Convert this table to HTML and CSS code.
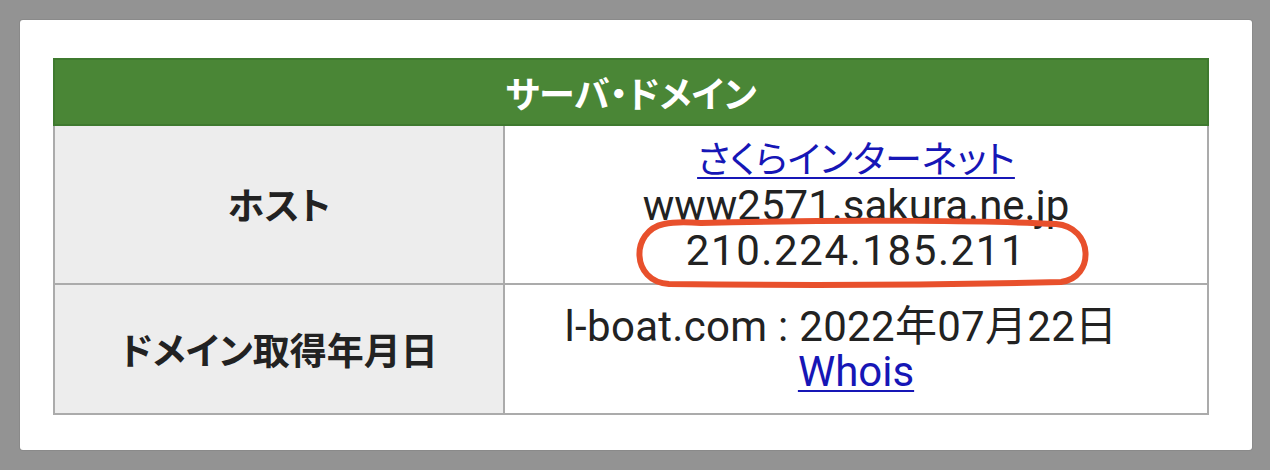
FILE: index.html
```html
<!DOCTYPE html>
<html lang="ja">
<head>
<meta charset="utf-8">
<link rel="stylesheet" href="styles.css">
</head>
<body>
<div class="panel">
  <table class="info">
    <tr>
      <th class="head" colspan="2">サーバ・ドメイン</th>
    </tr>
    <tr class="row-host">
      <td class="label">ホスト</td>
      <td class="value">
        <a class="host-link" href="#">さくらインターネット</a><br>
        www2571.sakura.ne.jp<br>
        <span class="ip">210.224.185.211</span>
        <svg class="mark" viewBox="630 215 470 75" width="470" height="75" aria-hidden="true">
          <path d="M 700 222 C 850 218, 1000 220, 1055 223 C 1093 226, 1094 277, 1060 281 C 900 285, 750 284, 668 283 C 630 281, 629 230, 663 223 C 676 220, 688 221, 700 222 Z" fill="none" stroke="#e8502c" stroke-width="6" stroke-linecap="round"/>
        </svg>
      </td>
    </tr>
    <tr class="row-domain">
      <td class="label">ドメイン取得年月日</td>
      <td class="value">
        <span class="date">l-boat.com : 2022年07月22日</span><br>
        <a href="#">Whois</a>
      </td>
    </tr>
  </table>
</div>
</body>
</html>
```

FILE: styles.css
```css
html, body {
  margin: 0;
  padding: 0;
}
body {
  background: #939393;
  width: 1270px;
  height: 470px;
  padding: 20px 18px 20px 20px;
  box-sizing: border-box;
}
.panel {
  background: #fff;
  width: 1232px;
  height: 430px;
  box-sizing: border-box;
  padding: 38px 43px 0 33px;
  border-radius: 3px;
  box-shadow: 0 0 0 1px #8a8a8a;
}
.info {
  border-collapse: collapse;
  width: 1156px;
  font-family: "Roboto", "Noto Sans CJK JP", sans-serif;
  font-feature-settings: "palt";
  color: #222;
}
.info th, .info td {
  border: 2px solid #ababab;
  padding: 0;
  text-align: center;
}
.head {
  background: #4a8636;
  color: #fff;
  font-family: "Noto Sans CJK JP", sans-serif;
  font-weight: 700;
  font-size: 36px;
  height: 64px;
  line-height: 1;
}
.info th.head {
  border-color: #3f7a2f;
}
.label {
  width: 448px;
  background: #ededed;
  font-family: "Noto Sans CJK JP", sans-serif;
  font-weight: 700;
  font-size: 37px;
  line-height: 1;
}
.value {
  position: relative;
  font-size: 42px;
  line-height: 45px;
  vertical-align: middle;
}
.row-host td {
  height: 157px;
}
.row-domain td {
  height: 128px;
}
.value a {
  color: #1616b6;
  text-decoration: underline;
  text-decoration-thickness: 2px;
  text-underline-offset: 4px;
}
.value .host-link {
  font-size: 37px;
}
.date {
  letter-spacing: 0.3px;
  margin-right: 30px;
}
.ip {
  letter-spacing: 1.6px;
}
.mark {
  position: absolute;
  left: 126px;
  top: 90px;
  pointer-events: none;
}
```
